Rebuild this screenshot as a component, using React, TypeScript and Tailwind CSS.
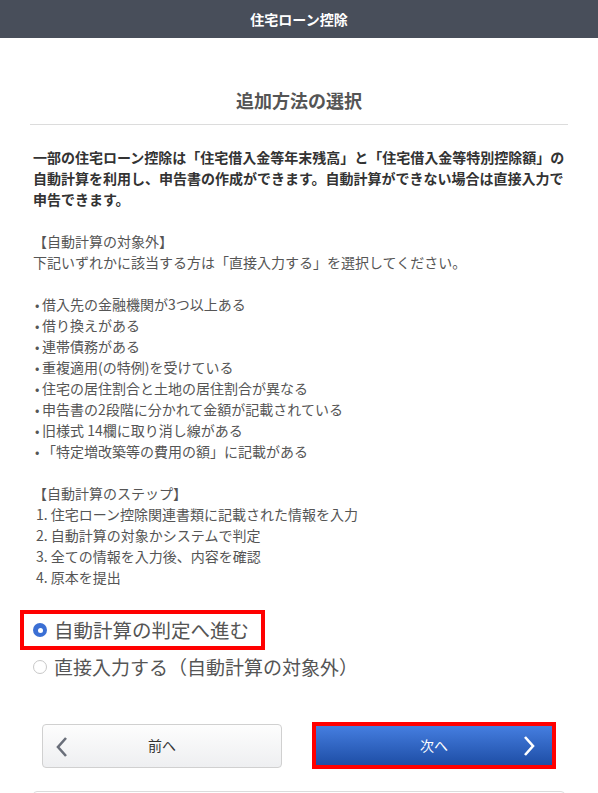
const exclusions = [
  '借入先の金融機関が3つ以上ある',
  '借り換えがある',
  '連帯債務がある',
  '重複適用(の特例)を受けている',
  '住宅の居住割合と土地の居住割合が異なる',
  '申告書の2段階に分かれて金額が記載されている',
  '旧様式 14欄に取り消し線がある',
  '「特定増改築等の費用の額」に記載がある',
]

const steps = [
  '1. 住宅ローン控除関連書類に記載された情報を入力',
  '2. 自動計算の対象かシステムで判定',
  '3. 全ての情報を入力後、内容を確認',
  '4. 原本を提出',
]

const Radio = ({ checked }: { checked?: boolean }) =>
  checked ? (
    <span className="flex h-[14px] w-[14px] shrink-0 items-center justify-center rounded-full bg-[#3b6fd4]">
      <span className="h-[5px] w-[5px] rounded-full bg-white" />
    </span>
  ) : (
    <span className="h-[14px] w-[14px] shrink-0 rounded-full border border-[#c8c8c8] bg-white" />
  )

export default function App() {
  return (
    <div className="min-h-[793px] bg-white font-['Noto_Sans_CJK_JP','Noto_Sans',sans-serif]">
      <header className="flex h-[38px] items-center justify-center bg-[#484e5a] text-[14px] font-bold text-white">
        住宅ローン控除
      </header>

      <main className="px-[33px]">
        <h2 className="mt-[49px] text-center text-[18px] leading-[27px] font-bold text-[#555]">追加方法の選択</h2>
        <div className="-mx-[3px] mt-[10px] border-b border-[#dcdcdc]" />

        <div className="mt-[22px] text-[14px] leading-[21px] text-[#555]">
          <p className="font-bold text-[#333]">
            一部の住宅ローン控除は「住宅借入金等年末残高」と「住宅借入金等特別控除額」の自動計算を利用し、申告書の作成ができます。自動計算ができない場合は直接入力で申告できます。
          </p>
          <p className="mt-[21px]">【自動計算の対象外】</p>
          <p>下記いずれかに該当する方は「直接入力する」を選択してください。</p>
          <ul className="mt-[21px]">
            {exclusions.map((t) => (
              <li key={t} className="flex">
                <span className="w-[9px] pl-[2px] text-[13px]">•</span>
                <span>{t}</span>
              </li>
            ))}
          </ul>
          <p className="mt-[21px]">【自動計算のステップ】</p>
          {steps.map((s) => (
            <p key={s} className="pl-[3px]">{s}</p>
          ))}
        </div>

        <div className="mt-[22px] flex flex-col text-[19.5px] leading-[28px] text-[#555]">
          <label className="-ml-[13px] flex h-[40px] w-[245px] items-center gap-[7px] border-[4px] border-[#ff0000] pl-[9px]">
            <Radio checked />
            <span>自動計算の判定へ進む</span>
          </label>
          <label className="mt-[3px] flex h-[28px] items-center gap-[7px]">
            <Radio />
            <span className="text-[19px]">直接入力する（自動計算の対象外）</span>
          </label>
        </div>

        <div className="mt-[41px] flex items-center justify-center gap-[30px]">
          <button className="relative flex h-[44px] w-[240px] items-center justify-center rounded-[4px] border border-[#d0d0d0] bg-gradient-to-b from-[#fdfdfd] to-[#eeeff1] text-[14px] text-[#333]">
            <svg className="absolute left-[12px] top-[11px]" width="14" height="22" viewBox="0 0 14 22">
              <polyline points="11,2 3,11 11,20" fill="none" stroke="#6a6f7a" strokeWidth="2.6" />
            </svg>
            前へ
          </button>
          <div className="border-[4px] border-[#ff0000]">
            <button className="relative flex h-[39px] w-[236px] items-center justify-center bg-gradient-to-b from-[#457ee0] to-[#1e4ea6] text-[14px] text-white">
              次へ
              <svg className="absolute right-[16px] top-[9px]" width="14" height="22" viewBox="0 0 14 22">
                <polyline points="3,2 11,11 3,20" fill="none" stroke="#ffffff" strokeWidth="2.6" />
              </svg>
            </button>
          </div>
        </div>

        <div className="mt-[22px] h-[40px] rounded-t-[4px] border border-[#dcdcdc]" />
      </main>
    </div>
  )
}
